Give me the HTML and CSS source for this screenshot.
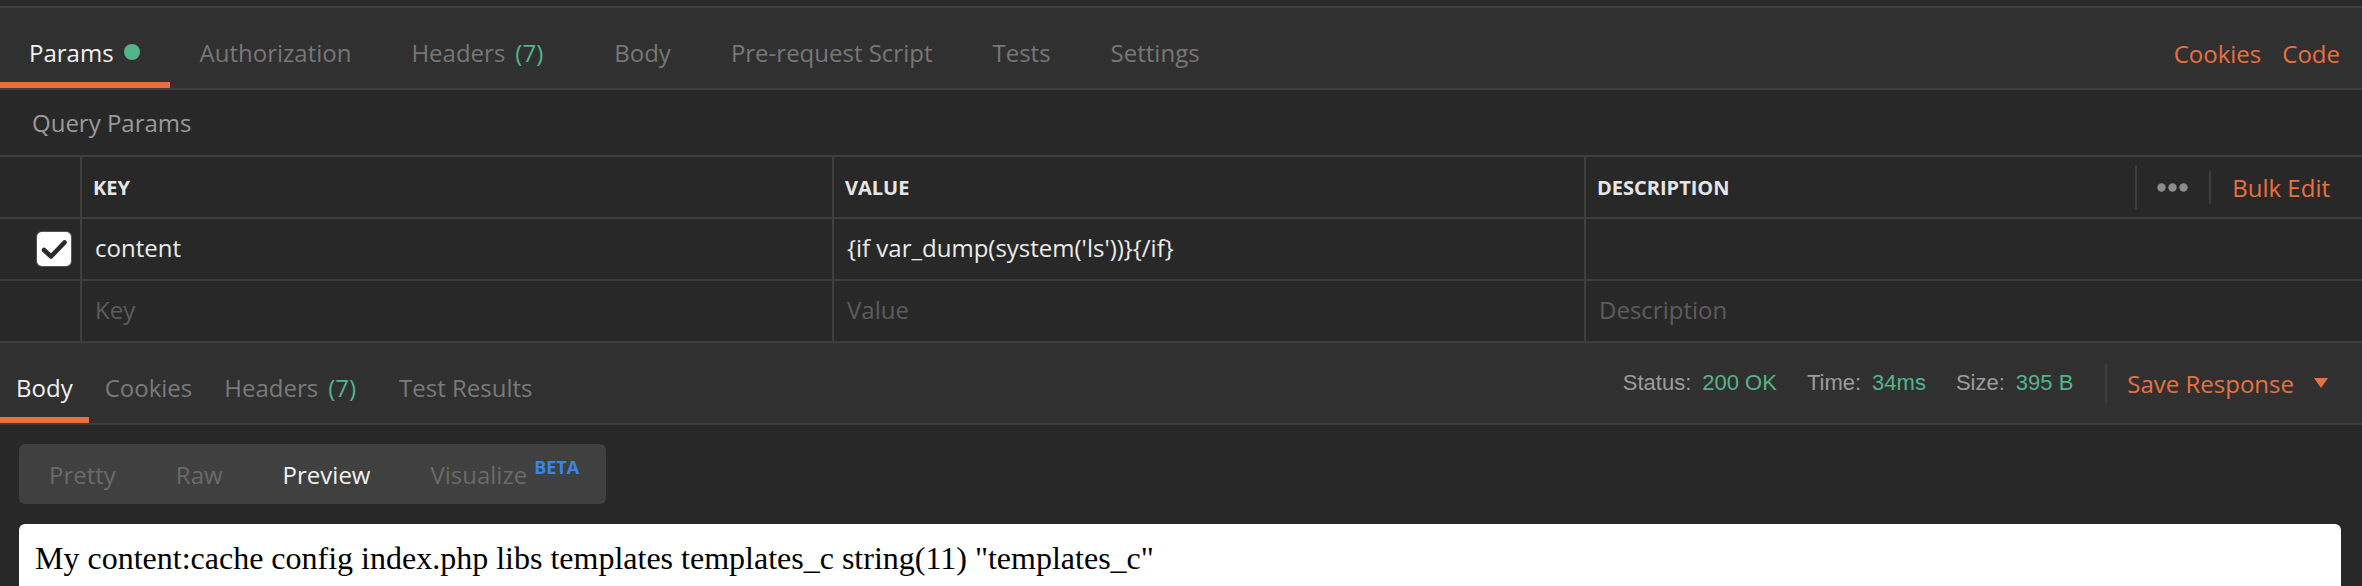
FILE: index.html
```html
<!DOCTYPE html>
<html lang="en">
<head>
<meta charset="utf-8">
<title>Postman – Params</title>
<link rel="stylesheet" href="styles.css">
</head>
<body>
<div class="app">
  <div class="top-strip"></div>

  <nav class="req-tabs">
    <div class="tab tab-active tab-first"><span>Params</span><span class="dot"></span></div>
    <div class="tab"><span>Authorization</span></div>
    <div class="tab"><span>Headers</span><span class="count">(7)</span></div>
    <div class="tab"><span>Body</span></div>
    <div class="tab"><span>Pre-request Script</span></div>
    <div class="tab"><span>Tests</span></div>
    <div class="tab"><span>Settings</span></div>
    <div class="req-links">
      <span class="link">Cookies</span>
      <span class="link">Code</span>
    </div>
  </nav>

  <div class="query-title">Query Params</div>

  <div class="params-table">
    <div class="row row-head">
      <div class="cell cell-check"></div>
      <div class="cell">KEY</div>
      <div class="cell">VALUE</div>
      <div class="cell cell-desc">
        <span>DESCRIPTION</span>
        <div class="head-actions">
          <span class="vsep vsep-tall"></span>
          <svg class="dots" width="31" height="9" viewBox="0 0 31 9"><circle cx="4.5" cy="4.5" r="4.2" fill="#8c8c8c"/><circle cx="15.5" cy="4.5" r="4.2" fill="#8c8c8c"/><circle cx="26.5" cy="4.5" r="4.2" fill="#8c8c8c"/></svg>
          <span class="vsep vsep-short"></span>
          <span class="link">Bulk Edit</span>
        </div>
      </div>
    </div>
    <div class="row">
      <div class="cell cell-check">
        <span class="checkbox">
          <svg width="34" height="34" viewBox="0 0 34 34"><path d="M7 18 L14 24.5 L27.5 10.5" fill="none" stroke="#2a2a2a" stroke-width="4.6" stroke-linecap="round" stroke-linejoin="round"/></svg>
        </span>
      </div>
      <div class="cell cell-text">content</div>
      <div class="cell cell-text">{if var_dump(system('ls'))}{/if}</div>
      <div class="cell cell-text"></div>
    </div>
    <div class="row">
      <div class="cell cell-check"></div>
      <div class="cell cell-ph">Key</div>
      <div class="cell cell-ph">Value</div>
      <div class="cell cell-ph">Description</div>
    </div>
  </div>

  <div class="res-bar">
    <div class="rtab rtab-active"><span>Body</span></div>
    <div class="rtab"><span>Cookies</span></div>
    <div class="rtab"><span>Headers</span><span class="count">(7)</span></div>
    <div class="rtab"><span>Test Results</span></div>
    <div class="res-meta">
      <span class="meta"><span class="meta-label">Status:</span><span class="meta-val">200 OK</span></span>
      <span class="meta"><span class="meta-label">Time:</span><span class="meta-val">34ms</span></span>
      <span class="meta"><span class="meta-label">Size:</span><span class="meta-val">395 B</span></span>
      <span class="vsep vsep-meta"></span>
      <span class="save">Save Response</span>
      <svg class="caret" width="14" height="10" viewBox="0 0 14 10"><polygon points="0,0 14,0 7,10" fill="#e8703f"/></svg>
    </div>
  </div>

  <div class="res-body">
    <div class="seg">
      <span class="seg-item">Pretty</span>
      <span class="seg-item">Raw</span>
      <span class="seg-item seg-active">Preview</span>
      <span class="seg-item seg-last">Visualize<sup class="beta">BETA</sup></span>
    </div>
    <div class="preview">My content:cache config index.php libs templates templates_c string(11) "templates_c"</div>
  </div>
</div>
</body>
</html>
```
FILE: styles.css
```css
html, body {
  margin: 0;
  padding: 0;
  background: #282828;
}
body {
  width: 2362px;
  height: 586px;
  overflow: hidden;
  font-family: "Open Sans", "Noto Sans", sans-serif;
  font-size: 24px;
  color: #f0f0f0;
}
.app {
  display: flex;
  flex-direction: column;
  height: 586px;
}
.top-strip {
  height: 6px;
  background: #2a2a2a;
  border-bottom: 2px solid #3e3e3e;
}

/* request tabs */
.req-tabs {
  display: flex;
  height: 80px;
  background: #303030;
  border-bottom: 2px solid #3e3e3e;
}
.tab {
  display: flex;
  align-items: center;
  gap: 10px;
  padding: 8px 30px 0;
  color: #777777;
  white-space: nowrap;
}
.tab-first { padding-left: 29px; }
.tab-active {
  color: #f2f2f2;
  box-shadow: inset 0 -6px 0 #e8703f;
}
.dot {
  width: 16px;
  height: 16px;
  border-radius: 50%;
  background: #54b489;
}
.count {
  color: #54b489;
  margin-right: 11px;
}
.req-links {
  margin-left: auto;
  display: flex;
  align-items: center;
  gap: 21px;
  padding: 10px 22px 0 0;
}
.link { color: #e8703f; white-space: nowrap; }

.query-title {
  height: 65px;
  display: flex;
  align-items: center;
  padding-left: 32px;
  color: #9a9a9a;
}

/* params table */
.params-table {
  border-top: 2px solid #3e3e3e;
}
.row {
  display: grid;
  grid-template-columns: 80px 752px 752px 1fr;
  height: 60px;
  border-bottom: 2px solid #3e3e3e;
}
.cell {
  display: flex;
  align-items: center;
  padding: 0 13px;
  border-left: 2px solid #3e3e3e;
  white-space: nowrap;
}
.cell-check {
  border-left: none;
  justify-content: flex-end;
  padding: 0 9px 0 0;
}
.row-head .cell {
  font-size: 20px;
  font-weight: 700;
  color: #e6e6e6;
  padding-left: 11px;
}
.row-head .cell-check { padding: 0; }
.cell-desc { padding-right: 0; }
.head-actions {
  margin-left: auto;
  display: flex;
  align-items: center;
  padding-right: 32px;
}
.vsep {
  display: block;
  width: 2px;
  background: #3e3e3e;
}
.vsep-tall { height: 43px; margin-right: 20px; }
.dots { display: block; margin-right: 21px; }
.vsep-short { height: 33px; margin-right: 21px; }
.row-head .link { font-weight: 400; font-size: 24px; color: #e8703f; }

.cell-text, .cell-ph {
  font-size: 24px;
  padding-bottom: 4px;
}
.cell-text { color: #ececec; }
.cell-ph { color: #5c5c5c; }

.checkbox {
  width: 34px;
  height: 34px;
  border-radius: 5px;
  background: #ffffff;
  box-shadow: 0 0 0 1px #555;
  display: block;
}
.checkbox svg { display: block; }

/* response bar */
.res-bar {
  display: flex;
  height: 80px;
  background: #303030;
  border-bottom: 2px solid #3e3e3e;
}
.rtab {
  display: flex;
  align-items: center;
  gap: 10px;
  padding: 8px 16px 0;
  color: #7a7a7a;
  white-space: nowrap;
}
.rtab-active {
  color: #f2f2f2;
  box-shadow: inset 0 -6px 0 #e8703f;
}
.res-meta {
  margin-left: auto;
  display: flex;
  align-items: center;
  padding-right: 34px;
  font-family: "Liberation Sans", Arial, sans-serif;
  font-size: 22px;
}
.meta {
  display: flex;
  gap: 11px;
  margin-right: 30px;
}
.meta:nth-child(3) { margin-right: 32px; }
.meta-label { color: #9c9c9c; }
.meta-val { color: #54b489; }
.vsep-meta { height: 39px; margin-right: 20px; }
.save {
  font-family: "Open Sans", "Noto Sans", sans-serif;
  font-size: 24px;
  color: #e8703f;
  margin-right: 20px;
}
.caret { display: block; }

/* response body */
.res-body {
  flex: 1;
  min-height: 0;
  padding: 19px 21px 0 19px;
  display: flex;
  flex-direction: column;
  align-items: flex-start;
}
.seg {
  display: flex;
  align-items: center;
  height: 60px;
  background: #404040;
  border-radius: 6px;
}
.seg-item {
  padding: 0 30px;
  color: #6a6a6a;
  white-space: nowrap;
}
.seg-active { color: #f2f2f2; }
.seg-last { padding-right: 27px; }
.beta {
  font-size: 18px;
  font-weight: 700;
  color: #3b84e6;
  margin-left: 7px;
  vertical-align: 10px;
  line-height: 0;
}
.preview {
  align-self: stretch;
  flex: 1;
  min-height: 0;
  overflow: hidden;
  margin-top: 20px;
  background: #ffffff;
  border-radius: 6px 6px 0 0;
  padding: 16px 16px 0;
  font-family: "Liberation Serif", "Times New Roman", serif;
  font-size: 32px;
  color: #000000;
  white-space: nowrap;
}
```
